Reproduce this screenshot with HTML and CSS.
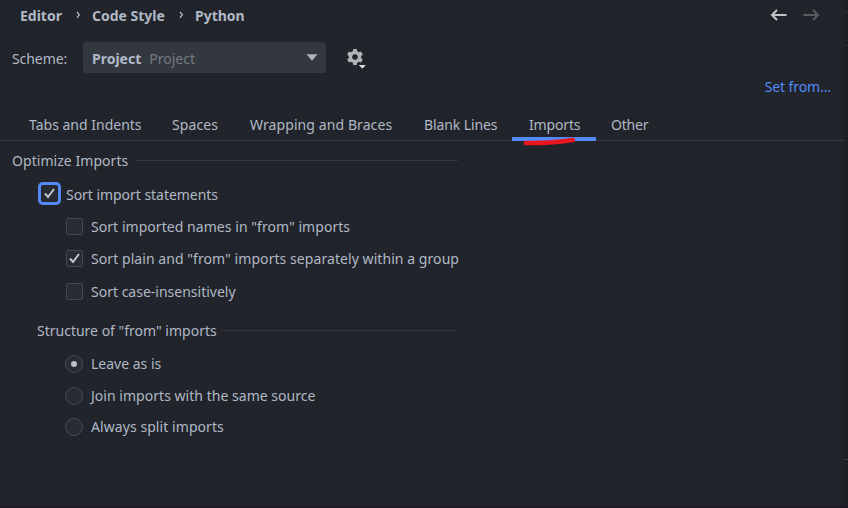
FILE: index.html
```html
<!DOCTYPE html>
<html lang="en">
<head>
<meta charset="utf-8">
<title>Code Style</title>
<link rel="stylesheet" href="styles.css">
</head>
<body>
<main class="panel">
  <header class="topbar">
    <nav class="crumbs">
      <span class="crumb-editor">Editor</span>
      <svg class="chev" width="5" height="8" viewBox="0 0 5 8"><path d="M1 .8 3.3 3.8 1 6.8"/></svg>
      <span class="crumb-style">Code Style</span>
      <svg class="chev" width="5" height="8" viewBox="0 0 5 8"><path d="M1 .8 3.3 3.8 1 6.8"/></svg>
      <span class="crumb-lang">Python</span>
    </nav>
    <div class="history">
      <svg class="arrow" width="17" height="12" viewBox="0 0 17 12"><path d="M16.5 6H2M7 1 2 6l5 5"/></svg>
      <svg class="arrow disabled" width="17" height="12" viewBox="0 0 17 12"><path d="M.5 6H15M10 1l5 5-5 5"/></svg>
    </div>
  </header>
  <div class="scheme">
    <span class="scheme-label">Scheme:</span>
    <div class="combo"><b>Project</b><span class="hint">Project</span>
      <svg class="caret" width="12" height="7" viewBox="0 0 12 7"><path d="M.5.3h11L6 6.700z"/></svg>
    </div>
    <svg class="gear" width="21" height="22" viewBox="0 0 21 22">
      <g fill="#b1b3b5"><circle cx="9" cy="9" r="6.200"/>
      <rect x="7" y="1" width="4" height="16" rx=".8"/><rect x="7" y="1" width="4" height="16" rx=".8" transform="rotate(60 9 9)"/><rect x="7" y="1" width="4" height="16" rx=".8" transform="rotate(120 9 9)"/></g>
      <circle cx="9" cy="9" r="2.800" fill="#21242b"/>
      <path d="M12.800 17h7L16.300 20.800z" fill="#dedfe0"/>
    </svg>
  </div>
  <div class="linkrow"><a class="link">Set from...</a></div>
  <div class="tabs">
    <span class="tab t1">Tabs and Indents</span>
    <span class="tab t2">Spaces</span>
    <span class="tab t3">Wrapping and Braces</span>
    <span class="tab t4">Blank Lines</span>
    <span class="tab t5 active">Imports<svg class="stroke" width="54" height="10" viewBox="0 0 54 10"><path d="M2.800 7Q28 7.500 50 4"/></svg></span>
    <span class="tab t6">Other</span>
  </div>
  <section class="options">
    <h2 class="heading"><span class="title">Optimize Imports</span></h2>
    <label class="row first"><span class="box focus"><svg width="16" height="16" viewBox="0 0 16 16"><path d="m3 7.500 3 3.500 6-8"/></svg></span><span class="w1">Sort import statements</span></label>
    <label class="row sub"><span class="box"></span><span class="w2">Sort imported names in "from" imports</span></label>
    <label class="row sub"><span class="box"><svg width="16" height="16" viewBox="0 0 16 16"><path d="m3 7.500 3 3.500 6-8"/></svg></span><span class="w3">Sort plain and "from" imports separately within a group</span></label>
    <label class="row sub"><span class="box"></span><span class="w4">Sort case-insensitively</span></label>
    <h3 class="heading nested"><span>Structure of "from" imports</span></h3>
    <label class="row radio"><span class="dot on"></span><span>Leave as is</span></label>
    <label class="row radio"><span class="dot"></span><span class="w6">Join imports with the same source</span></label>
    <label class="row radio"><span class="dot"></span><span class="w7">Always split imports</span></label>
  </section>
  <aside class="edge"><i class="tick a"></i><i class="tick b"></i><i class="tick c"></i></aside>
</main>
</body>
</html>
```
FILE: styles.css
```css
* { box-sizing: border-box; }
body {
  margin: 0;
  background: #21242b;
  color: #b0b8c5;
  font: 14px/20px "Noto Sans", "Open Sans", sans-serif;
}
.panel {
  position: relative;
  height: 508px;
  overflow: hidden;
  border-bottom: 2px solid #1d1a24;
  white-space: nowrap;
}
.topbar {
  display: flex;
  justify-content: space-between;
  height: 42px;
  padding: 6px 28px 0 20px;
}
.crumbs { display: flex; font-weight: 700; }
.crumbs span { flex: none; }
.crumb-editor { width: 56px; }
.crumb-style { width: 87px; }
.crumbs .chev { flex: none; margin: 5px 11px 0 0; }
.chev path { fill: none; stroke: #b0b8c5; stroke-width: 1.3; }
.history { display: flex; gap: 16px; padding-top: 3px; }
.arrow { fill: none; stroke: #c3c5c8; stroke-width: 2; }
.arrow.disabled { stroke: #5a5c60; }
.scheme { display: flex; height: 31px; padding-left: 12px; align-items: center; }
.scheme-label { width: 71px; padding-top: 2px; letter-spacing: -.08px; }
.combo {
  display: flex;
  align-items: center;
  width: 243px;
  height: 31px;
  padding: 2px 9px 0;
  border-radius: 3px;
  background: #333840;
}
.hint { margin-left: 8px; color: #777a80; }
.caret { margin: 0 -1px 2px auto; fill: #a9b2c0; }
.gear { margin: 3px 0 0 20px; }
.linkrow { display: flex; justify-content: flex-end; height: 37px; padding: 4px 17px 0 0; }
.link { color: #548af7; letter-spacing: -.1px; }
.tabs {
  display: flex;
  height: 31px;
  padding-left: 29px;
  border-bottom: 1px solid #353941;
}
.tab { height: 31px; padding-top: 5px; }
.t1 { width: 143px; }
.t2 { width: 78px; letter-spacing: .1px; }
.t3 { width: 174px; letter-spacing: .09px; }
.t4 { width: 88px; letter-spacing: -.1px; }
.t5 { width: 84px; padding-left: 17px; margin-right: 15px; letter-spacing: -.15px; }
.t6 { letter-spacing: -.2px; }
.active { position: relative; border-bottom: 4px solid #548af7; }
.stroke { position: absolute; left: 11px; top: 26px; }
.stroke path { fill: none; stroke: #e9161d; stroke-width: 4.500; stroke-linecap: round; }
.options { width: 458px; }
.heading {
  display: flex;
  align-items: center;
  gap: 8px;
  height: 39px;
  margin: 0;
  padding-left: 12px;
  font-size: 14px;
  font-weight: 400;
}
.title { letter-spacing: .05px; }
.heading::after { content: ""; flex: 1; height: 1px; background: #343840; }
.nested { height: 44px; padding-left: 37px; margin: 1px 0 -4px; }
.row { display: flex; align-items: center; height: 32.500px; }
.first { height: 28px; margin-bottom: 2px; padding-left: 41px; gap: 8px; }
.sub { padding-left: 66px; gap: 8px; }
.radio { height: 31.400px; padding-left: 65px; gap: 8px; }
.row span { flex: none; }
.w1 { padding-top: 1px; letter-spacing: -.04px; }
.w2 { padding-top: 1px; letter-spacing: .05px; }
.w3 { padding-top: 1px; letter-spacing: .065px; }
.w4 { padding-top: 1px; }
.w6 { letter-spacing: .03px; }
.w7 { letter-spacing: .07px; }
.box {
  width: 17px;
  height: 17px;
  border: 1px solid #444852;
  border-radius: 2px;
  background: #282b33;
}
.box svg { display: block; }
.box path { fill: none; stroke: #c0c6d0; stroke-width: 2; }
.focus { margin-bottom: 1px; border-color: #21242b; box-shadow: 0 0 0 3px #548af7; }
.dot {
  display: grid;
  place-items: center;
  width: 18px;
  height: 18px;
  border: 1px solid #484c56;
  border-radius: 50%;
  background: #282b33;
}
.on::after { content: ""; width: 6px; height: 6px; border-radius: 50%; background: #b8c0cc; }
.edge {
  position: absolute;
  right: 0;
  top: 0;
  width: 4px;
  height: 508px;
  background: #1e2026;
}
.tick { position: absolute; left: 0; width: 4px; height: 1px; background: #2d3035; }
.a { top: 11px; }
.b { top: 45px; }
.c { top: 459px; background: #414449; }
```
